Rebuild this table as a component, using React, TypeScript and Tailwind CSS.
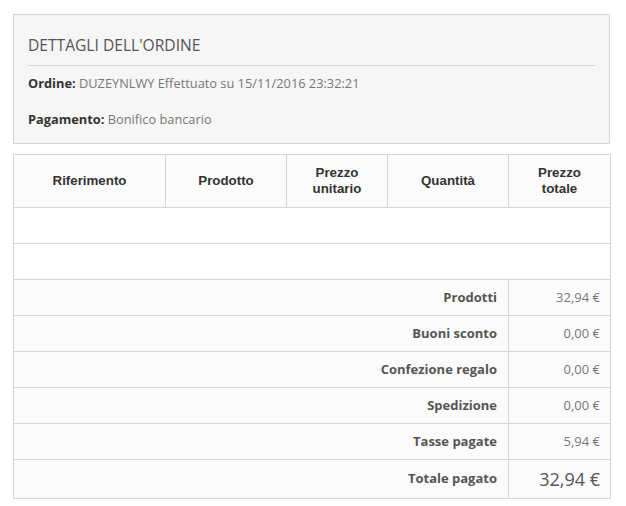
const righe = [
  { label: "Prodotti", value: "32,94 €" },
  { label: "Buoni sconto", value: "0,00 €" },
  { label: "Confezione regalo", value: "0,00 €" },
  { label: "Spedizione", value: "0,00 €" },
  { label: "Tasse pagate", value: "5,94 €" },
];

const colonne = [
  { label: "Riferimento", w: "w-[152px]" },
  { label: "Prodotto", w: "w-[121px]" },
  { label: "Prezzo unitario", w: "w-[101px]" },
  { label: "Quantità", w: "w-[121px]" },
  { label: "Prezzo totale", w: "w-[102px]" },
];

export default function App() {
  return (
    <div className="min-h-[506px] bg-white pl-[13px] pt-[14px] font-['Open_Sans',sans-serif] text-[13px] text-[#777]">
      <div className="w-[597px] border border-[#d6d4d4] bg-[#f6f6f6] px-[14px] pb-[15px] pt-[20px]">
        <h3 className="text-[15.6px] uppercase leading-[20px] text-[#555]">
          Dettagli dell'ordine
        </h3>
        <div className="mt-[10px] border-t border-[#d6d4d4]" />
        <p className="mt-[8px] text-[12.8px] leading-[18px]">
          <strong className="font-bold text-[#333]">Ordine:</strong> DUZEYNLWY Effettuato su 15/11/2016 23:32:21
        </p>
        <p className="mt-[18px] text-[12.8px] leading-[18px]">
          <strong className="font-bold text-[#333]">Pagamento:</strong> Bonifico bancario
        </p>
      </div>

      <table className="mt-[10px] w-[597px] table-fixed border-collapse border border-[#d6d4d4]">
        <thead>
          <tr className="h-[53px] bg-[#fbfbfb]">
            {colonne.map((c) => (
              <th
                key={c.label}
                className={`${c.w} border border-[#d6d4d4] px-[20px] font-['Liberation_Sans',Arial,sans-serif] text-[13.3px] font-bold leading-[16px] text-[#333]`}
              >
                {c.label}
              </th>
            ))}
          </tr>
        </thead>
        <tbody>
          <tr className="h-[36px] bg-white">
            <td colSpan={5} className="border border-[#d6d4d4]" />
          </tr>
          <tr className="h-[36px] bg-white">
            <td colSpan={5} className="border border-[#d6d4d4]" />
          </tr>
        </tbody>
        <tfoot>
          {righe.map((r) => (
            <tr key={r.label} className="h-[36px] bg-[#fbfbfb]">
              <td colSpan={4} className="border border-[#d6d4d4] pr-[11px] text-right font-bold text-[#555]">
                {r.label}
              </td>
              <td className="border border-[#d6d4d4] pr-[10px] text-right text-[#777]">{r.value}</td>
            </tr>
          ))}
          <tr className="h-[39px] bg-[#fbfbfb]">
            <td colSpan={4} className="border border-[#d6d4d4] pr-[11px] text-right font-bold text-[#555]">
              Totale pagato
            </td>
            <td className="border border-[#d6d4d4] pr-[10px] text-right text-[18px] text-[#555]">32,94 €</td>
          </tr>
        </tfoot>
      </table>
    </div>
  );
}
